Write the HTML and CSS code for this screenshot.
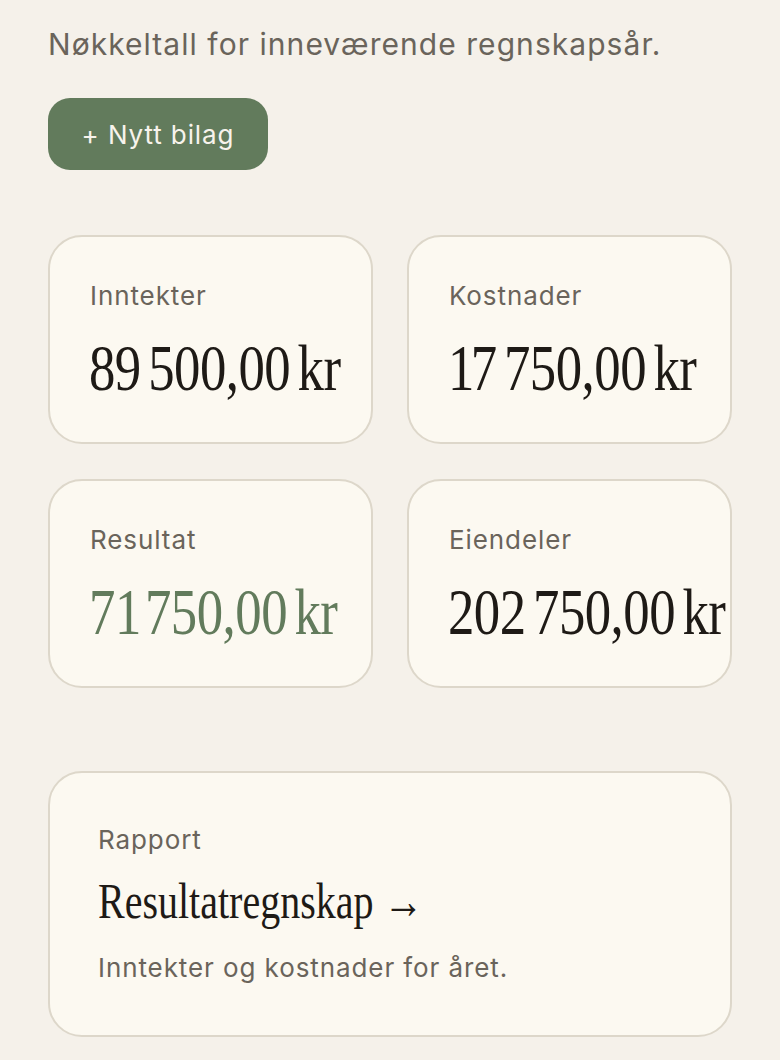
FILE: index.html
```html
<!DOCTYPE html>
<html lang="no">
<head>
<meta charset="utf-8">
<title>Nøkkeltall</title>
<link rel="stylesheet" href="styles.css">
</head>
<body>
<main class="page">
  <p class="subtitle">Nøkkeltall for inneværende regnskapsår.</p>
  <button class="btn-primary" type="button">+ Nytt bilag</button>

  <section class="stats">
    <div class="stat-card">
      <div class="stat-label">Inntekter</div>
      <div class="stat-value"><span class="serif-narrow">89 500,00 kr</span></div>
    </div>
    <div class="stat-card">
      <div class="stat-label">Kostnader</div>
      <div class="stat-value"><span class="serif-narrow"><span class="one">1</span>7 750,00 kr</span></div>
    </div>
    <div class="stat-card">
      <div class="stat-label">Resultat</div>
      <div class="stat-value positive"><span class="serif-narrow">7<span class="one">1</span> 750,00 kr</span></div>
    </div>
    <div class="stat-card">
      <div class="stat-label">Eiendeler</div>
      <div class="stat-value"><span class="serif-narrow">202 750,00 kr</span></div>
    </div>
  </section>

  <a class="report-card" href="#">
    <div class="report-label">Rapport</div>
    <div class="report-title"><span class="serif-narrow title-narrow">Resultatregnskap →</span></div>
    <div class="report-desc">Inntekter og kostnader for året.</div>
  </a>
</main>
</body>
</html>
```

FILE: styles.css
```css
* { box-sizing: border-box; }

html, body {
  margin: 0;
  padding: 0;
  background: #f5f1ea;
}

body {
  font-family: Inter, "Noto Sans", "Liberation Sans", sans-serif;
  color: #1e1a16;
  overflow: hidden;
}

.page {
  padding: 26px 48px 0;
}

.subtitle {
  margin: 0;
  font-size: 30px;
  line-height: 36px;
  letter-spacing: 0.035em;
  color: #6a645b;
}

.btn-primary {
  margin-top: 36px;
  height: 72px;
  width: 220px;
  padding: 0;
  border: none;
  border-radius: 22px;
  background: #627b5c;
  color: #f7f3ec;
  font-family: Inter, "Noto Sans", sans-serif;
  font-size: 26px;
  letter-spacing: 0.035em;
  display: block;
}

.stats {
  margin-top: 65px;
  display: grid;
  grid-template-columns: 1fr 1fr;
  gap: 35px 34px;
}

.stat-card {
  background: #fcf9f1;
  border: 2px solid #ddd7ca;
  border-radius: 34px;
  padding: 43px 40px 43px 39px;
  min-width: 0;
}

.stat-label {
  font-size: 26px;
  line-height: 32px;
  letter-spacing: 0.035em;
  color: #6a645b;
  padding-left: 1px;
}

.stat-value {
  margin-top: 21px;
  font-size: 66px;
  line-height: 1;
  height: 66px;
  color: #1e1a16;
  white-space: nowrap;
}

.stat-value.positive { color: #627b5c; }

.serif-narrow {
  display: inline-block;
  font-family: "Liberation Serif", "DejaVu Serif", serif;
  transform: scaleX(0.8);
  transform-origin: left center;
  word-spacing: -0.1em;
  letter-spacing: -0.01em;
}

.one {
  letter-spacing: -0.07em;
}

.report-card {
  display: block;
  margin-top: 83px;
  background: #fcf9f1;
  border: 2px solid #ddd7ca;
  border-radius: 34px;
  padding: 50px 48px 50px;
  text-decoration: none;
  color: inherit;
}

.report-label {
  font-size: 26px;
  line-height: 34px;
  letter-spacing: 0.035em;
  color: #6a645b;
}

.report-title {
  margin-top: 16px;
  font-size: 50px;
  line-height: 55px;
  height: 55px;
  white-space: nowrap;
  color: #1e1a16;
}

.title-narrow {
  word-spacing: 0;
  letter-spacing: 0;
}

.report-desc {
  margin-top: 23px;
  font-size: 26px;
  line-height: 34px;
  letter-spacing: 0.035em;
  color: #6a645b;
}
```
